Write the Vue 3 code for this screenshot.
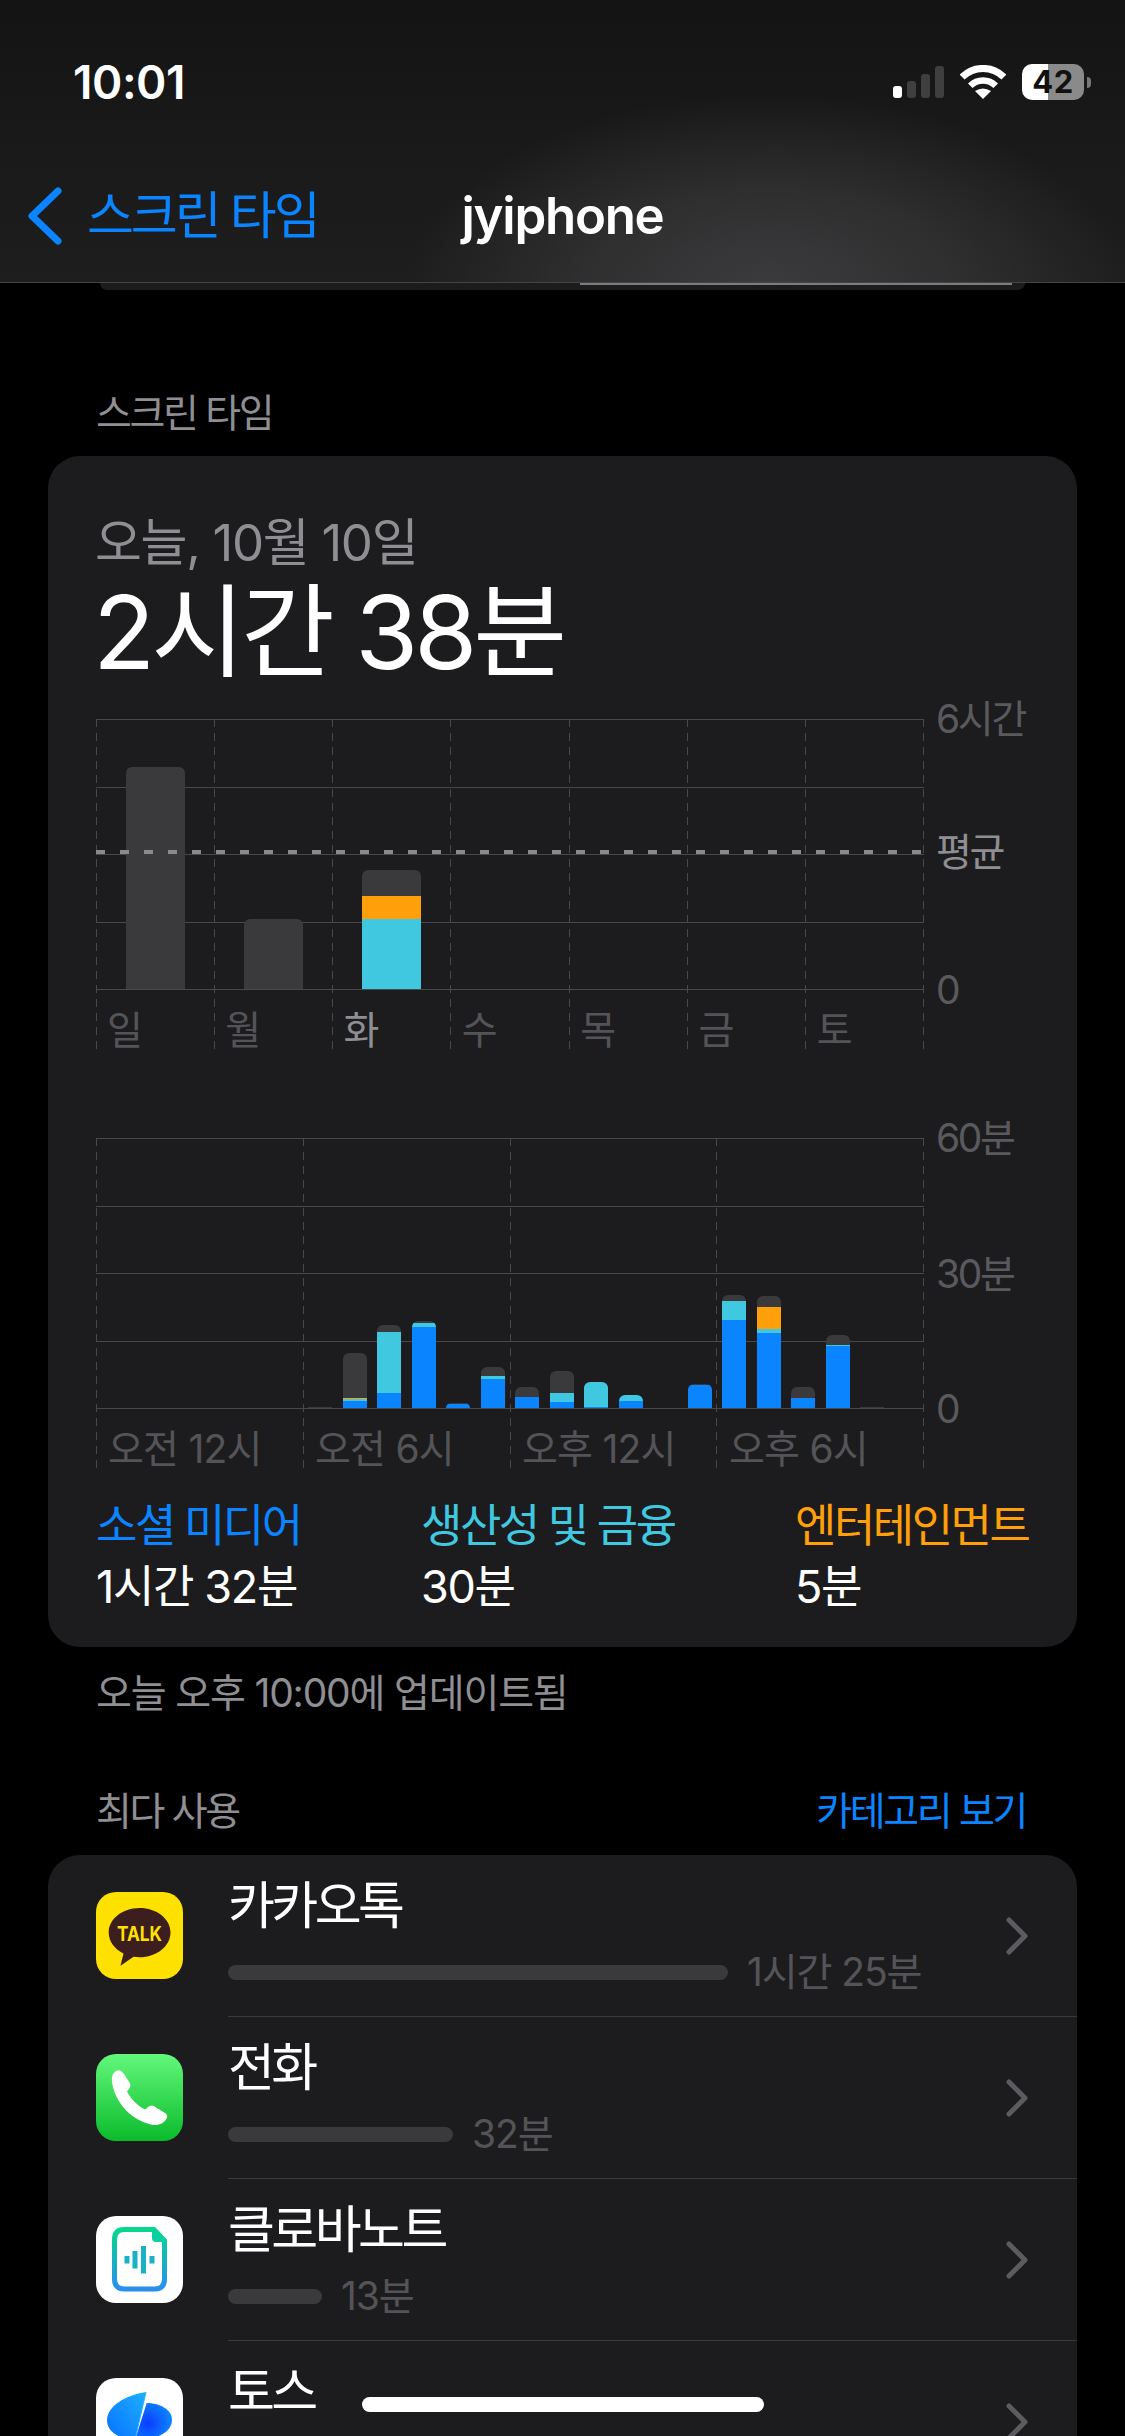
<script setup>
const weekDays = ['일', '월', '화', '수', '목', '금', '토']
const dayBars = [
  [{ c: 'gray', h: 222 }],
  [{ c: 'gray', h: 70 }],
  [{ c: 'cyan', h: 70 }, { c: 'orange', h: 23 }, { c: 'gray', h: 26 }],
  [], [], [], [],
]

// 시간대별 사용량, 아래에서 위로 쌓임
const hourBars = Array.from({ length: 24 }, () => [])
hourBars[6] = [{ c: 'gray', h: 1 }]
hourBars[7] = [{ c: 'blue', h: 7 }, { c: 'cyan', h: 2 }, { c: 'orange', h: 1 }, { c: 'gray', h: 45 }]
hourBars[8] = [{ c: 'blue', h: 15 }, { c: 'cyan', h: 61 }, { c: 'gray', h: 7 }]
hourBars[9] = [{ c: 'blue', h: 81 }, { c: 'cyan', h: 4 }, { c: 'gray', h: 2 }]
hourBars[10] = [{ c: 'blue', h: 4 }, { c: 'gray', h: 1 }]
hourBars[11] = [{ c: 'blue', h: 29 }, { c: 'cyan', h: 3 }, { c: 'gray', h: 9 }]
hourBars[12] = [{ c: 'blue', h: 11 }, { c: 'gray', h: 10 }]
hourBars[13] = [{ c: 'blue', h: 6 }, { c: 'cyan', h: 9 }, { c: 'gray', h: 22 }]
hourBars[14] = [{ c: 'blue', h: 1 }, { c: 'cyan', h: 25 }]
hourBars[15] = [{ c: 'blue', h: 7 }, { c: 'cyan', h: 6 }]
hourBars[17] = [{ c: 'blue', h: 23 }, { c: 'gray', h: 1 }]
hourBars[18] = [{ c: 'blue', h: 88 }, { c: 'cyan', h: 19 }, { c: 'gray', h: 6 }]
hourBars[19] = [{ c: 'blue', h: 75 }, { c: 'cyan', h: 4 }, { c: 'orange', h: 22 }, { c: 'gray', h: 11 }]
hourBars[20] = [{ c: 'blue', h: 10 }, { c: 'gray', h: 11 }]
hourBars[21] = [{ c: 'blue', h: 62 }, { c: 'cyan', h: 1 }, { c: 'gray', h: 10 }]
hourBars[22] = [{ c: 'gray', h: 1 }]

const hourLabels = ['오전 12시', '오전 6시', '오후 12시', '오후 6시']

const legend = [
  { name: '소셜 미디어', time: '1시간 32분', c: 'blue' },
  { name: '생산성 및 금융', time: '30분', c: 'cyan' },
  { name: '엔터테인먼트', time: '5분', c: 'orange' },
]

const apps = [
  { id: 'kakao', name: '카카오톡', bar: 500, time: '1시간 25분' },
  { id: 'phone', name: '전화', bar: 225, time: '32분' },
  { id: 'clova', name: '클로바노트', bar: 94, time: '13분' },
  { id: 'toss', name: '토스', bar: 60, time: '', hidden: true },
]

const signal = [
  { h: 12, on: true },
  { h: 17, on: false },
  { h: 24, on: false },
  { h: 32, on: false },
]
</script>

<template>
  <div class="page">
    <header class="top">
      <div class="status">
        <span class="clock">10:01</span>
        <div class="status-icons">
          <div class="signal">
            <i v-for="(s, i) in signal" :key="i" :class="{ on: s.on }" :style="{ height: s.h + 'px' }"></i>
          </div>
          <svg class="wifi" width="46" height="34" viewBox="0 0 46 34" fill="none" stroke="#fff">
            <path d="M2.1 12.1a29.5 29.5 0 0 1 41.8 0" stroke-width="7" />
            <path d="M10.3 20.7a18 18 0 0 1 25.4 0" stroke-width="6.5" />
            <path d="M23 34 15 26q8-5 16 0z" fill="#fff" stroke="none" />
          </svg>
          <div class="battery">
            <div class="battery-body">42</div>
            <div class="battery-tip"></div>
          </div>
        </div>
      </div>
      <nav class="nav">
        <div class="back">
          <svg width="36" height="58" viewBox="0 0 36 58" fill="none" stroke="#0a84ff" stroke-width="7" stroke-linecap="round" stroke-linejoin="round">
            <path d="M31 4 5 29l26 25" />
          </svg>
          <span>스크린 타임</span>
        </div>
        <div class="nav-title">jyiphone</div>
        <div></div>
      </nav>
    </header>
    <div class="peek"><div class="peek-line"></div></div>

    <main class="content">
      <div class="section-label first">스크린 타임</div>
      <section class="card usage">
        <div class="date">오늘, 10월 10일</div>
        <div class="total">2시간 38분</div>

        <div class="chart">
          <div class="chart-main">
            <div class="vlines">
              <i v-for="n in 8" :key="n"></i>
            </div>
            <div class="plot">
              <div class="hlines"><i v-for="n in 5" :key="n"></i></div>
              <div class="avg"></div>
              <div class="bars week">
                <div v-for="(bar, i) in dayBars" :key="i" class="slot">
                  <div v-if="bar.length" class="bar">
                    <div v-for="(s, j) in bar" :key="j" :class="s.c" :style="{ height: s.h + 'px' }"></div>
                  </div>
                </div>
              </div>
            </div>
            <div class="xlabels">
              <span v-for="(d, i) in weekDays" :key="d" :class="{ today: i === 2 }">{{ d }}</span>
            </div>
          </div>
          <div class="axis">
            <span>6시간</span>
            <span class="avg-label">평균</span>
            <span>0</span>
          </div>
        </div>

        <div class="chart second">
          <div class="chart-main">
            <div class="vlines">
              <i v-for="n in 5" :key="n"></i>
            </div>
            <div class="plot">
              <div class="hlines"><i v-for="n in 5" :key="n"></i></div>
              <div class="bars hours">
                <div v-for="(bar, i) in hourBars" :key="i" class="slot">
                  <div v-if="bar.length" class="bar">
                    <div v-for="(s, j) in bar" :key="j" :class="s.c" :style="{ height: s.h + 'px' }"></div>
                  </div>
                </div>
              </div>
            </div>
            <div class="xlabels hours-labels">
              <span v-for="l in hourLabels" :key="l">{{ l }}</span>
            </div>
          </div>
          <div class="axis">
            <span>60분</span>
            <span>30분</span>
            <span>0</span>
          </div>
        </div>

        <div class="legend">
          <div v-for="item in legend" :key="item.name">
            <div class="legend-name" :class="'text-' + item.c">{{ item.name }}</div>
            <div class="legend-time">{{ item.time }}</div>
          </div>
        </div>
      </section>

      <div class="note">오늘 오후 10:00에 업데이트됨</div>

      <div class="most-head">
        <span class="section-label">최다 사용</span>
        <span class="see-cat">카테고리 보기</span>
      </div>

      <section class="card list">
        <div v-for="app in apps" :key="app.id" class="row">
          <svg v-if="app.id === 'kakao'" class="app-icon" viewBox="0 0 87 87">
            <rect width="87" height="87" rx="20" fill="#ffe100" />
            <path d="M43.500 16C26.500 16 12.700 27 12.700 40.500c0 9 6 16.700 14.800 21l-3 12.200 13-8.900c2 .3 4 .5 6 .5 17 0 31-11 31-24.800S60.500 16 43.500 16z" fill="#3c1e1e" />
            <text x="43.500" y="48.500" text-anchor="middle" class="talk" textLength="45" lengthAdjust="spacingAndGlyphs">TALK</text>
          </svg>

          <svg v-else-if="app.id === 'phone'" class="app-icon" viewBox="0 0 87 87">
            <defs>
              <linearGradient id="phoneBg" x1="0" y1="0" x2="0" y2="1">
                <stop offset="0" stop-color="#63f87b" />
                <stop offset="1" stop-color="#0abb2b" />
              </linearGradient>
            </defs>
            <rect width="87" height="87" rx="20" fill="url(#phoneBg)" />
            <path d="M21 16.500C24 15.500 26 17 28 20l5.500 8.500c1.500 2.500 1 4.500-.5 6.500l-2 2.500c3 6.500 11 14.500 18 18l3-2.500c2-1.500 4-2 6.500-.5L69 59c2.500 1.500 3 4 1 6.500-3 4.500-8 6-13 5.500C36 67 19 49 16 28c-.5-6 1-10 5-11.500z" fill="#fff" />
          </svg>

          <svg v-else-if="app.id === 'clova'" class="app-icon" viewBox="0 0 87 87">
            <defs>
              <linearGradient id="clovaEdge" gradientUnits="userSpaceOnUse" x1="0" y1="11" x2="0" y2="76">
                <stop offset="0" stop-color="#05d98c" />
                <stop offset="1" stop-color="#2a8cf2" />
              </linearGradient>
            </defs>
            <rect width="87" height="87" rx="20" fill="#fff" />
            <path d="M28 13.500h30l10.500 11V63Q68.500 73 58.500 73H28.500Q18.500 73 18.500 63V23.500Q18.500 13.500 28 13.500z" fill="none" stroke="url(#clovaEdge)" stroke-width="5" />
            <path d="M56 11l15 15H60q-4 0-4-4z" fill="#0bcfa0" />
            <g fill="#18b2c4">
              <rect x="28.500" y="40" width="5" height="7.500" />
              <rect x="36.500" y="35" width="5" height="17.500" />
              <rect x="45" y="30" width="5" height="27.500" />
              <rect x="53.500" y="40" width="5" height="7.500" />
            </g>
          </svg>

          <svg v-else class="app-icon" viewBox="0 0 87 87">
            <defs>
              <linearGradient id="tossLeft" x1="1" y1="0" x2="0" y2="1">
                <stop offset="0" stop-color="#1eb0ff" />
                <stop offset="1" stop-color="#0670ff" />
              </linearGradient>
              <radialGradient id="tossRight" cx="0.35" cy="0.55" r="0.7">
                <stop offset="0" stop-color="#0a3cff" />
                <stop offset="1" stop-color="#0e8cff" />
              </radialGradient>
            </defs>
            <rect width="87" height="87" rx="20" fill="#fff" />
            <path d="M50.700 25 39 62c20 0 37-7 37-20 0-11-13-17-25.300-17z" fill="url(#tossRight)" />
            <path d="M50 14C30 17 11 28 11 42c0 13 14 19 28 20z" fill="url(#tossLeft)" />
            <path d="M50 14 39 62" stroke="#27b4ff" stroke-width="1" />
          </svg>

          <div class="row-body">
            <div class="row-text">
              <div class="app-name">{{ app.name }}</div>
              <div v-if="app.hidden" class="scribble"></div>
              <div v-else class="app-usage">
                <div class="usage-bar" :style="{ width: app.bar + 'px' }"></div>
                <span>{{ app.time }}</span>
              </div>
            </div>
            <svg class="chevron" width="22" height="38" viewBox="0 0 22 38" fill="none" stroke="#5c5c60" stroke-width="5" stroke-linecap="round" stroke-linejoin="round">
              <path d="M3 3l16 16L3 35" />
            </svg>
          </div>
        </div>
      </section>
    </main>
  </div>
</template>

<style>
html, body {
  margin: 0;
  background: #000;
}
</style>

<style scoped>
.page {
  width: 1125px;
  height: 2436px;
  overflow: hidden;
  background: #000;
  color: #fff;
  font-family: Inter, "Noto Sans CJK KR", sans-serif;
  font-size: 39px;
  line-height: 48px;
  letter-spacing: -0.06em;
}

/* header */
.top {
  height: 282px;
  border-bottom: 1px solid #444446;
  background:
    radial-gradient(ellipse 360px 190px at 770px 285px, #3b3b3d 0%, rgba(59, 59, 61, 0.6) 50%, rgba(59, 59, 61, 0) 100%),
    linear-gradient(#141414, #1e1e1e);
}
.status {
  height: 164px;
  display: flex;
  justify-content: space-between;
  align-items: center;
  padding: 0 34px 0 73px;
}
.clock {
  font-size: 46px;
  font-weight: 600;
  letter-spacing: -0.01em;
}
.status-icons {
  display: flex;
  align-items: center;
  gap: 16px;
}
.signal {
  display: flex;
  align-items: flex-end;
  gap: 5.3px;
  height: 32px;
}
.signal i {
  width: 8.7px;
  border-radius: 3px;
  background: #3f3f3f;
}
.signal i.on {
  background: #fff;
}
.battery {
  display: flex;
  align-items: center;
  gap: 3px;
}
.battery-body {
  width: 62px;
  height: 36px;
  border-radius: 10px;
  background: linear-gradient(90deg, #fff 42%, #8a8a8a 42%);
  color: #111;
  font-size: 31px;
  font-weight: 700;
  line-height: 36px;
  letter-spacing: 0.02em;
  text-align: center;
}
.battery-tip {
  width: 4px;
  height: 11px;
  border-radius: 0 6px 6px 0;
  background: #777;
}
.nav {
  height: 103px;
  padding: 0 27px 15px 27px;
  display: grid;
  grid-template-columns: minmax(0, 1fr) auto minmax(0, 1fr);
  align-items: center;
}
.back {
  display: flex;
  align-items: center;
  gap: 24px;
  color: #0a84ff;
  font-size: 51px;
  line-height: 60px;
  letter-spacing: -0.06em;
  white-space: nowrap;
}
.nav-title {
  font-size: 51px;
  font-weight: 600;
  line-height: 60px;
  letter-spacing: -0.025em;
}
.peek {
  height: 7px;
  margin: 0 100px;
  background: #1c1c1e;
  border-radius: 0 0 24px 24px;
  display: flex;
  justify-content: flex-end;
}
.peek-line {
  width: 432px;
  height: 2px;
  margin-right: 13px;
  background: #7c7c7e;
}

/* content */
.content {
  padding: 0 48px;
}
.section-label {
  color: #8e8e93;
}
.section-label.first {
  display: block;
  margin: 99px 0 19px 48px;
}
.card {
  background: #1c1c1e;
  border-radius: 32px;
}
.usage {
  padding: 57px 0 32px 48px;
}
.date {
  margin-left: -1px;
  color: #8e8e93;
  font-size: 51px;
  line-height: 60px;
  letter-spacing: -0.026em;
}
.total {
  margin: 4px 0 0 -3px;
  font-size: 102px;
  line-height: 110px;
  letter-spacing: -0.04em;
}

/* charts */
.chart {
  display: grid;
  grid-template-columns: 828px auto;
  column-gap: 12px;
  margin-top: 32px;
}
.chart.second {
  margin-top: 89px;
}
.chart-main {
  position: relative;
}
.vlines {
  position: absolute;
  inset: 0;
  display: flex;
  justify-content: space-between;
}
.vlines i {
  width: 1px;
  background: repeating-linear-gradient(#48484a 0 8px, transparent 8px 14px);
}
.plot {
  position: relative;
  height: 271px;
}
.hlines {
  position: absolute;
  inset: 0;
  display: flex;
  flex-direction: column;
  justify-content: space-between;
}
.hlines i {
  height: 1px;
  background: #48484a;
}
.avg {
  position: absolute;
  left: 0;
  right: 0;
  top: 131px;
  height: 4px;
  z-index: 2;
  background: repeating-linear-gradient(90deg, #8a8a8c 0 9px, transparent 9px 24px);
}
.bars {
  position: relative;
  height: 100%;
  display: grid;
  align-items: end;
}
.bars.week {
  grid-template-columns: repeat(7, 1fr);
}
.bars.hours {
  grid-template-columns: repeat(24, 1fr);
}
.slot {
  display: flex;
  justify-content: center;
  padding-bottom: 1px;
}
.bar {
  display: flex;
  flex-direction: column-reverse;
  overflow: hidden;
  border-radius: 6px 6px 0 0;
}
.week .bar {
  width: 59px;
}
.hours .bar {
  width: 24px;
}
.blue { background: #0a84ff; }
.cyan { background: #40c8e0; }
.orange { background: #ff9f0a; }
.gray { background: #3a3a3c; }

.xlabels {
  position: relative;
  height: 59px;
  padding-top: 16px;
  box-sizing: border-box;
  display: grid;
  grid-template-columns: repeat(7, 1fr);
  color: #545458;
}
.xlabels span {
  padding-left: 11px;
}
.xlabels .today {
  color: #8e8e93;
}
.hours-labels {
  grid-template-columns: repeat(4, 1fr);
  letter-spacing: -0.02em;
}
.hours-labels span {
  padding-left: 12px;
}
.axis {
  height: 319px;
  margin-top: -24px;
  display: flex;
  flex-direction: column;
  justify-content: space-between;
  color: #5a5a5e;
}
.axis span {
  height: 48px;
}
.axis .avg-label {
  color: #8e8e93;
  margin-bottom: 6px;
}
.legend {
  display: grid;
  grid-template-columns: 325px 374px auto;
  margin-top: 30px;
}
.legend-name {
  font-size: 45px;
  line-height: 56px;
  letter-spacing: -0.056em;
}
.legend-time {
  margin-top: 5px;
  font-size: 45px;
  line-height: 56px;
  letter-spacing: -0.03em;
}
.text-blue { color: #0a84ff; }
.text-cyan { color: #40c8e0; }
.text-orange { color: #ff9f0a; }

.note {
  margin: 22px 0 0 48px;
  color: #8e8e93;
  letter-spacing: -0.03em;
}
.most-head {
  display: flex;
  justify-content: space-between;
  margin: 70px 0 20px;
  padding: 0 51px 0 48px;
}
.see-cat {
  color: #0a84ff;
}

/* app list */
.row {
  display: flex;
  height: 162px;
  padding-left: 48px;
}
.app-icon {
  flex: none;
  width: 87px;
  height: 87px;
  margin: 37px 45px 0 0;
}
.talk {
  font-size: 20px;
  font-weight: 700;
  letter-spacing: 0;
  fill: #ffe100;
}
.row-body {
  flex: 1;
  display: flex;
  align-items: center;
  justify-content: space-between;
  padding-right: 49px;
  border-bottom: 1px solid #3a3a3c;
}
.row-text {
  position: relative;
  align-self: flex-start;
  padding-top: 21px;
}
.app-name {
  font-size: 51px;
  line-height: 60px;
  letter-spacing: -0.07em;
}
.app-usage {
  display: flex;
  align-items: center;
  gap: 19px;
  margin-top: 12px;
  color: #545458;
  letter-spacing: -0.028em;
}
.usage-bar {
  height: 15px;
  border-radius: 8px;
  background: #3a3a3c;
}
.scribble {
  position: absolute;
  left: 134px;
  top: 56px;
  width: 402px;
  height: 15px;
  border-radius: 8px;
  background: #fff;
}
</style>
